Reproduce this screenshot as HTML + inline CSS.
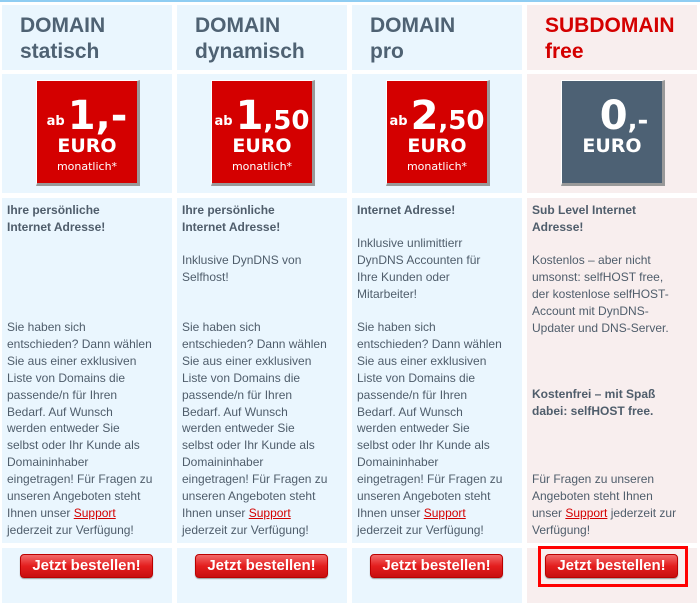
<!DOCTYPE html>
<html><head><meta charset="utf-8"><style>
*{margin:0;padding:0;box-sizing:border-box}
body{width:700px;height:606px;background:#fff;position:relative;overflow:hidden;font-family:"Liberation Sans",Arial,sans-serif;color:#4f5d6b}
.topline{position:absolute;left:0;top:0;width:700px;height:2px;background:#8fcdf2}
.c{position:absolute;background:#eaf6fe}
.p{background:#f8eeee}
.h{font-weight:bold;font-size:21px;line-height:26px;color:#4f6273;padding:8px 0 0 18px}
.h.r{color:#d40000}
.box{position:absolute;left:34px;top:6px;width:104px;height:106px;background:#d40000;border-right:3px solid #999;border-bottom:3px solid #999;border-top:1px solid #fff;border-left:1px solid #fff;color:#fff;text-align:center;font-family:"DejaVu Sans",sans-serif;font-weight:bold}
.box .n{position:absolute;top:10px;left:0;width:100%;font-size:40px;line-height:50px}
.box .n small{font-size:13px;vertical-align:4px;margin-right:3px}
.box .n i{font-style:normal;font-size:26px}
.box .e{position:absolute;top:52px;left:0;width:100%;font-size:19px;line-height:26px}
.box .m{position:absolute;top:79px;left:0;width:100%;font-size:11px;font-weight:normal;line-height:14px}
.g{background:#4d6174}
.t{position:absolute;left:5px;font-size:12px;line-height:16.9px;white-space:nowrap}
.b{font-weight:bold}
a{color:#d40000;text-decoration:underline}
.btn{position:absolute;top:6px;left:18px;width:133px;height:24px;border-radius:4px;background:linear-gradient(#f26a6a,#e41e1e 50%,#c80f0f);border:1px solid #b00;color:#fff;font-weight:bold;font-size:15px;line-height:22px;text-align:center;box-shadow:0 1px 1px #999}
.frame{position:absolute;left:11px;top:-2px;width:150px;height:41px;border:3px solid #f00}
</style></head><body>
<div class="topline"></div>

<div class="c" style="left:2px;top:5px;width:170px;height:65px"><div class="h">DOMAIN<br>statisch</div></div>
<div class="c" style="left:177px;top:5px;width:170px;height:65px"><div class="h">DOMAIN<br>dynamisch</div></div>
<div class="c" style="left:352px;top:5px;width:170px;height:65px"><div class="h">DOMAIN<br>pro</div></div>
<div class="c p" style="left:527px;top:5px;width:170px;height:65px"><div class="h r">SUBDOMAIN<br>free</div></div>

<div class="c" style="left:2px;top:74px;width:170px;height:119px"><div class="box"><div class="n"><small>ab</small>1,-</div><div class="e">EURO</div><div class="m">monatlich*</div></div></div>
<div class="c" style="left:177px;top:74px;width:170px;height:119px"><div class="box"><div class="n"><small>ab</small>1<i>,50</i></div><div class="e">EURO</div><div class="m">monatlich*</div></div></div>
<div class="c" style="left:352px;top:74px;width:170px;height:119px"><div class="box"><div class="n"><small>ab</small>2<i>,50</i></div><div class="e">EURO</div><div class="m">monatlich*</div></div></div>
<div class="c p" style="left:527px;top:74px;width:170px;height:119px"><div class="box g"><div class="n" style="left:12px">0<i>,-</i></div><div class="e">EURO</div></div></div>

<div class="c" style="left:2px;top:198px;width:170px;height:345px">
<div class="t b" style="top:4px">Ihre persönliche<br>Internet Adresse!</div>
<div class="t" style="top:121px">Sie haben sich<br>entschieden? Dann wählen<br>Sie aus einer exklusiven<br>Liste von Domains die<br>passende/n für Ihren<br>Bedarf. Auf Wunsch<br>werden entweder Sie<br>selbst oder Ihr Kunde als<br>Domaininhaber<br>eingetragen! Für Fragen zu<br>unseren Angeboten steht<br>Ihnen unser <a>Support</a><br>jederzeit zur Verfügung!</div>
</div>
<div class="c" style="left:177px;top:198px;width:170px;height:345px">
<div class="t b" style="top:4px">Ihre persönliche<br>Internet Adresse!</div>
<div class="t" style="top:54px">Inklusive DynDNS von<br>Selfhost!</div>
<div class="t" style="top:121px">Sie haben sich<br>entschieden? Dann wählen<br>Sie aus einer exklusiven<br>Liste von Domains die<br>passende/n für Ihren<br>Bedarf. Auf Wunsch<br>werden entweder Sie<br>selbst oder Ihr Kunde als<br>Domaininhaber<br>eingetragen! Für Fragen zu<br>unseren Angeboten steht<br>Ihnen unser <a>Support</a><br>jederzeit zur Verfügung!</div>
</div>
<div class="c" style="left:352px;top:198px;width:170px;height:345px">
<div class="t b" style="top:4px">Internet Adresse!</div>
<div class="t" style="top:37px">Inklusive unlimittierr<br>DynDNS Accounten für<br>Ihre Kunden oder<br>Mitarbeiter!</div>
<div class="t" style="top:121px">Sie haben sich<br>entschieden? Dann wählen<br>Sie aus einer exklusiven<br>Liste von Domains die<br>passende/n für Ihren<br>Bedarf. Auf Wunsch<br>werden entweder Sie<br>selbst oder Ihr Kunde als<br>Domaininhaber<br>eingetragen! Für Fragen zu<br>unseren Angeboten steht<br>Ihnen unser <a>Support</a><br>jederzeit zur Verfügung!</div>
</div>
<div class="c p" style="left:527px;top:198px;width:170px;height:345px">
<div class="t b" style="top:4px">Sub Level Internet<br>Adresse!</div>
<div class="t" style="top:54px">Kostenlos – aber nicht<br>umsonst: selfHOST free,<br>der kostenlose selfHOST-<br>Account mit DynDNS-<br>Updater und DNS-Server.</div>
<div class="t b" style="top:188px">Kostenfrei – mit Spaß<br>dabei: selfHOST free.</div>
<div class="t" style="top:273px">Für Fragen zu unseren<br>Angeboten steht Ihnen<br>unser <a>Support</a> jederzeit zur<br>Verfügung!</div>
</div>

<div class="c" style="left:2px;top:548px;width:170px;height:55px"><div class="btn">Jetzt bestellen!</div></div>
<div class="c" style="left:177px;top:548px;width:170px;height:55px"><div class="btn">Jetzt bestellen!</div></div>
<div class="c" style="left:352px;top:548px;width:170px;height:55px"><div class="btn">Jetzt bestellen!</div></div>
<div class="c p" style="left:527px;top:548px;width:170px;height:55px"><div class="frame"></div><div class="btn">Jetzt bestellen!</div></div>
</body></html>
